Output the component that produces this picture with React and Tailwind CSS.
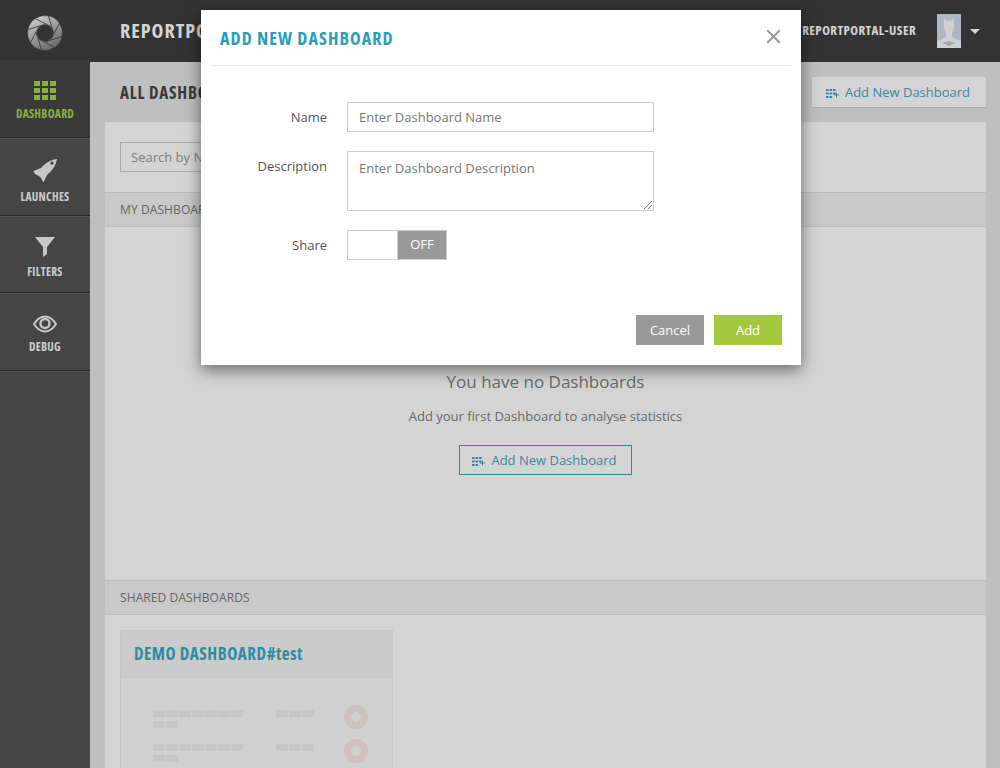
import { X } from "lucide-react";

const sans = "font-['Open_Sans',sans-serif]";
const cond = "font-['Open_Sans',sans-serif] font-bold [font-stretch:75%]";

function GridPlus() {
  return (
    <svg width="13" height="9" viewBox="0 0 13 9" fill="currentColor">
      {[
        [0, 0], [3.5, 0], [7, 0],
        [0, 3.5], [3.5, 3.5], [7, 3.5],
        [0, 7], [3.5, 7],
      ].map(([x, y]) => (
        <rect key={`${x}-${y}`} x={x} y={y} width="2.6" height="2" />
      ))}
      <rect x="8" y="5.5" width="5" height="1" />
      <rect x="10" y="3.5" width="1" height="5" />
    </svg>
  );
}

function DashIcon() {
  return (
    <svg width="22" height="19" viewBox="0 0 22 19" fill="#a9d052">
      {[0, 7, 14].map((y) =>
        [0, 8, 16].map((x) => <rect key={`${x}-${y}`} x={x} y={y} width="6" height="5" />)
      )}
    </svg>
  );
}

function RocketIcon() {
  return (
    <svg width="24" height="24" viewBox="8 8 24 24" fill="#f0f0f0">
      <path
        fillRule="evenodd"
        d="M32 9C27 9.5 21 12 16 18L8.5 21C8.5 23 11 25 14 26L16 28C17 30 18 32 18.5 32.5L22 25C28 20 31 15 32 9ZM27 11.5a1.6 1.6 0 1 0 .01 0Z"
      />
    </svg>
  );
}

function FunnelIcon() {
  return (
    <svg width="20" height="20" viewBox="0 0 20 20" fill="#f0f0f0">
      <path d="M0 0H20L12 10V17L8 20V10Z" />
    </svg>
  );
}

function EyeIcon() {
  return (
    <svg width="24" height="18" viewBox="0 0 24 18" fill="none" stroke="#f0f0f0">
      <path strokeWidth="2" d="M1 9C4.5 3.5 8 1.5 12 1.5S19.5 3.5 23 9C19.5 14.5 16 16.5 12 16.5S4.5 14.5 1 9Z" />
      <circle cx="12" cy="8.5" r="4.5" strokeWidth="2.4" />
    </svg>
  );
}

function Avatar() {
  return (
    <svg width="24" height="34" viewBox="0 0 24 34">
      <rect width="24" height="34" fill="#d2dbe8" />
      <path
        fill="#fbfbfb"
        d="M7 12V4L9 6.5H15L17 4V12C17 15 16 17 15 19V22C17 25 21 26 24 27V34H0V27C3 26 7 25 9 22V19C8 17 7 15 7 12Z"
      />
      <path fill="#c3cad4" d="M5 29C8 28 10 28 12 27C14 28 16 28 19 29C16 30 14 31 12 32C10 31 8 30 5 29Z" />
    </svg>
  );
}

function Logo() {
  const p = (r, t) => `${(18 + r * Math.cos(t)).toFixed(2)} ${(18 + r * Math.sin(t)).toFixed(2)}`;
  const blades = [0, 1, 2, 3, 4, 5, 6, 7].map((i) => {
    const a = (i * Math.PI) / 4 + 0.2;
    const b = a + Math.PI / 4;
    return { i, d: `M${p(17.5, a)} A17.5 17.5 0 0 1 ${p(17.5, b)} L${p(8.5, b + 1.25)} L${p(8.5, a + 1.25)} Z` };
  });
  return (
    <svg width="36" height="36" viewBox="0 0 36 36">
      <defs>
        <linearGradient id="logoGrad" gradientUnits="userSpaceOnUse" x1="8" y1="2" x2="26" y2="34">
          <stop offset="0" stopColor="#f4f4f4" />
          <stop offset="1" stopColor="#7d7d7d" />
        </linearGradient>
      </defs>
      {blades.map((b) => (
        <path key={b.i} d={b.d} fill="url(#logoGrad)" stroke="#3e3e3e" strokeWidth="0.6" />
      ))}
    </svg>
  );
}

function NavItem({ icon, label, active, box }) {
  return (
    <div
      className={`flex flex-col items-center border-b border-b-[#2f2f2f] shadow-[0_1px_0_#666666] ${box} ${
        active ? "bg-[#464646] text-[#a9d052]" : "text-[#f5f5f5]"
      }`}
    >
      <div className="flex h-[24px] items-center justify-center">{icon}</div>
      <div className={`${cond} text-[11.5px] leading-[16px] tracking-[0.3px]`}>{label}</div>
    </div>
  );
}

function MiniRow() {
  return (
    <div className="flex items-start">
      <div className="w-[123px] ml-[32px]">
        <div className="flex gap-[1px]">
          {[1, 2, 3, 4, 5, 6, 7].map((i) => (
            <div key={i} className="w-[12px] h-[7px] bg-[#eeeeee]" />
          ))}
        </div>
        <div className="flex gap-[1px] mt-[4px]">
          {[1, 2].map((i) => (
            <div key={i} className="w-[12px] h-[7px] bg-[#eeeeee]" />
          ))}
        </div>
      </div>
      <div className="flex gap-[1px]">
        {[1, 2, 3].map((i) => (
          <div key={i} className="w-[12px] h-[7px] bg-[#eeeeee]" />
        ))}
      </div>
      <svg width="24" height="24" viewBox="0 0 24 24" className="ml-[30px] -mt-[5px]">
        <circle cx="12" cy="12" r="8.5" fill="none" stroke="#f8e8e6" strokeWidth="7" />
      </svg>
    </div>
  );
}

function Content() {
  return (
    <div className="flex-1 flex flex-col min-w-0">
      <div className="h-[62px] bg-[#3e3e3e] flex items-center pl-[30px] shrink-0">
        <div className={`${cond} text-[20px] tracking-[1px] text-white`}>REPORTPORTAL</div>
        <div className={`${cond} text-[13px] tracking-[0.45px] text-white ml-auto`}>REPORTPORTAL-USER</div>
        <div className="ml-[21px]">
          <Avatar />
        </div>
        <div className="ml-[9px] mr-[20px] w-0 h-0 border-x-[5px] border-x-transparent border-t-[5px] border-t-white" />
      </div>
      <div className="flex-1 bg-[#e6e6e6] pl-[15px] pr-[14px] min-h-0 overflow-hidden">
        <div className="h-[60px] flex items-center">
          <div className={`${cond} text-[17px] tracking-[0.8px] text-[#464646] ml-[15px] pt-[2px]`}>ALL DASHBOARDS</div>
          <div className={`${sans} ml-auto w-[174px] h-[30px] pt-[2px] pr-[2px] flex items-center justify-center gap-[6px] bg-white text-[#4aa5bc] text-[13px] shadow-[0_1px_1px_rgba(0,0,0,0.1)]`}>
            <GridPlus />
            Add New Dashboard
          </div>
        </div>
        <div className="bg-white h-[646px]">
          <div className="h-[70px] pt-[20px] px-[15px]">
            <div className={`${sans} w-[240px] h-[30px] border border-[#cccccc] text-[13px] leading-[28px] px-[10px] text-[#999999]`}>
              Search by Name
            </div>
          </div>
          <div className={`${sans} h-[35px] bg-[#f2f2f2] border-y border-[#e2e2e2] pl-[15px] text-[12px] tracking-[0.1px] leading-[33px] text-[#7a7a7a]`}>
            MY DASHBOARDS
          </div>
          <div className="h-[353px] flex flex-col items-center pt-[143px]">
            <div className={`${sans} text-[17px] leading-[24px] text-[#808080]`}>You have no Dashboards</div>
            <div className={`${sans} text-[13px] leading-[18px] mt-[13px] text-[#808080]`}>
              Add your first Dashboard to analyse statistics
            </div>
            <div className={`${sans} mt-[20px] w-[173px] h-[30px] pt-[2px] pr-[2px] flex items-center justify-center gap-[6px] border border-[#35a6bc] text-[#4aa5bc] text-[13px]`}>
              <GridPlus />
              Add New Dashboard
            </div>
          </div>
          <div className={`${sans} h-[35px] bg-[#f2f2f2] border-y border-[#e2e2e2] pl-[15px] text-[12px] tracking-[0.1px] leading-[33px] text-[#7a7a7a]`}>
            SHARED DASHBOARDS
          </div>
          <div className="pt-[15px] px-[15px]">
            <div className="w-[273px] h-[200px] bg-[#fbfbfb] border border-[#eeeeee]">
              <div className="h-[47px] bg-[#f5f5f5] border-b border-[#eeeeee] pl-[13px] flex items-center">
                <div className={`${cond} text-[17px] tracking-[0.55px] text-[#34a9c4]`}>DEMO DASHBOARD#test</div>
              </div>
              <div className="pt-[32px] flex flex-col gap-[15px]">
                <MiniRow />
                <MiniRow />
              </div>
            </div>
          </div>
        </div>
      </div>
    </div>
  );
}

function Modal() {
  return (
    <div className="absolute left-[201px] top-[10px] w-[600px] h-[355px] bg-white shadow-[0_5px_15px_rgba(0,0,0,0.5)]">
      <div className="mx-[10px] h-[56px] border-b border-[#e9e9e9] flex items-center pl-[9px] pr-[6px]">
        <div className={`${cond} text-[18px] tracking-[1.06px] pt-[2px] text-[#2a9db8]`}>ADD NEW DASHBOARD</div>
        <X className="ml-auto -mt-[2px] text-[#999999]" size={23} strokeWidth={2} />
      </div>
      <div className="pt-[36px] flex flex-col">
        <div className="flex items-center h-[30px]">
          <div className={`${sans} w-[126px] pt-[2px] text-right text-[13px] text-[#555555]`}>Name</div>
          <div className={`${sans} ml-[20px] w-[307px] h-[30px] border border-[#cccccc] px-[11px] text-[13px] leading-[28px] text-[#777777]`}>
            Enter Dashboard Name
          </div>
        </div>
        <div className="flex items-start h-[60px] mt-[19px]">
          <div className={`${sans} w-[126px] text-right text-[13px] leading-[30px] text-[#555555]`}>Description</div>
          <div className={`${sans} relative ml-[20px] w-[307px] h-[60px] border border-[#cccccc] px-[11px] pt-[6px] text-[13px] leading-[20px] text-[#777777]`}>
            Enter Dashboard Description
            <svg width="8" height="8" viewBox="0 0 8 8" className="absolute right-[1px] bottom-[1px]" stroke="#777777" strokeWidth="1">
              <path d="M0 8 8 0M4 8 8 4" />
            </svg>
          </div>
        </div>
        <div className="flex items-center h-[30px] mt-[19px]">
          <div className={`${sans} w-[126px] pt-[2px] text-right text-[13px] text-[#555555]`}>Share</div>
          <div className="ml-[20px] w-[100px] h-[30px] border border-[#cccccc] flex">
            <div className="w-[50px] bg-white border-r border-[#cccccc]" />
            <div className={`${sans} flex-1 bg-[#999999] text-white text-[13px] flex items-center justify-center`}>OFF</div>
          </div>
        </div>
      </div>
      <div className="flex justify-end gap-[10px] pr-[19px] mt-[55px]">
        <div className={`${sans} w-[68px] h-[30px] pt-[2px] bg-[#999999] text-white text-[13px] flex items-center justify-center`}>Cancel</div>
        <div className={`${sans} w-[68px] h-[30px] pt-[2px] bg-[#a5c93e] text-white text-[13px] flex items-center justify-center`}>Add</div>
      </div>
    </div>
  );
}

export default function App() {
  return (
    <div className="relative w-[1000px] h-[768px] overflow-hidden flex">
      <div className="w-[90px] shrink-0 bg-[#535353] flex flex-col">
        <div className="h-[60px] bg-[#3e3e3e] flex items-center justify-center pt-[5px]">
          <Logo />
        </div>
        <NavItem box="h-[78px] pt-[18px] gap-[4px]" active label="DASHBOARD" icon={<DashIcon />} />
        <NavItem box="h-[78px] pt-[20px] gap-[7px]" label="LAUNCHES" icon={<RocketIcon />} />
        <NavItem box="h-[77px] pt-[19px] gap-[5px]" label="FILTERS" icon={<FunnelIcon />} />
        <NavItem box="h-[78px] pt-[19px] gap-[3px]" label="DEBUG" icon={<EyeIcon />} />
      </div>
      <Content />
      <div className="absolute inset-0 bg-black/[0.17]" />
      <Modal />
    </div>
  );
}
